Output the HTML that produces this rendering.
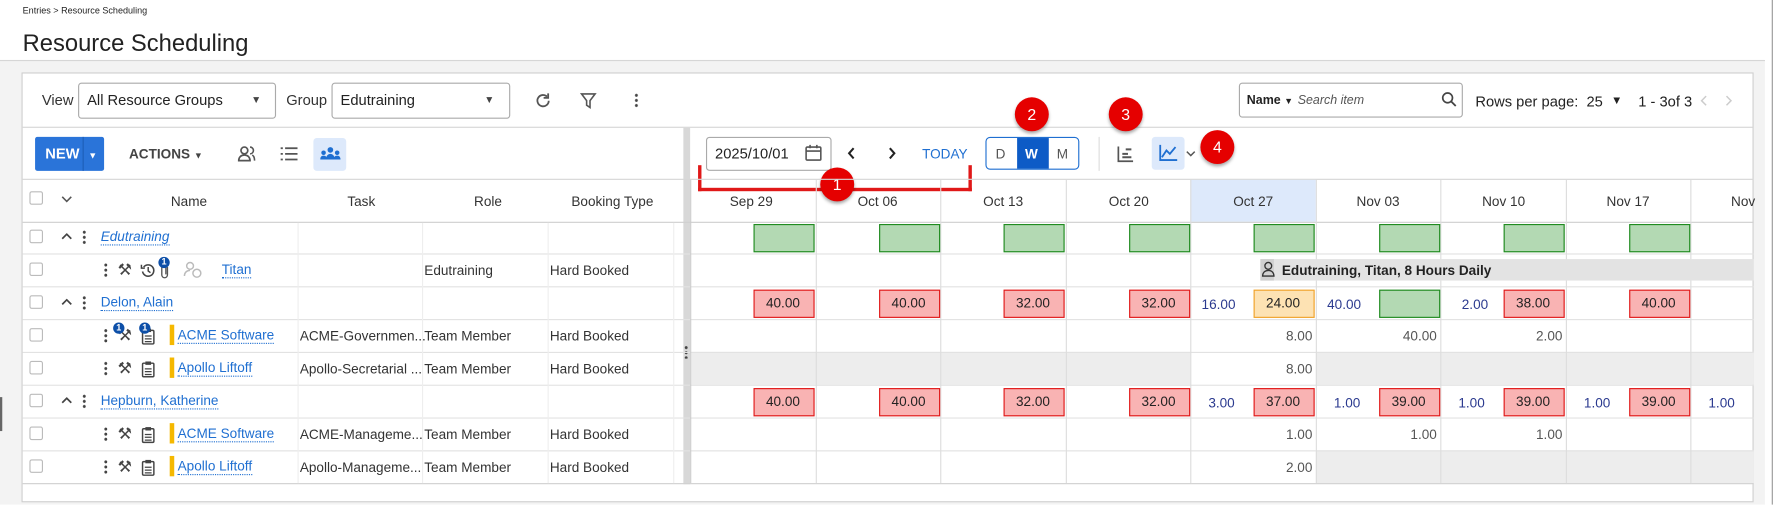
<!DOCTYPE html>
<html><head><meta charset="utf-8"><style>
*{box-sizing:border-box;margin:0;padding:0}
body{width:1774px;height:505px;overflow:hidden;background:#fff;font-family:"Liberation Sans",sans-serif;}
#w{position:absolute;left:0;top:0;width:1568px;height:446px;transform:scale(1.13138);transform-origin:0 0;}
.a{position:absolute}
.t{position:absolute;font-size:12px;color:#333;white-space:nowrap;line-height:14px}
.lk{color:#1f6fd1;border-bottom:1px dotted #1f6fd1;line-height:13px}
.cb{position:absolute;width:12px;height:12px;border:1px solid #bbb;border-radius:2px;background:#fff}
.hl{position:absolute;height:1px;background:#e2e2e2}
.vl{position:absolute;width:1px;background:#ddd}
.g{position:absolute;width:54px;height:25px;background:#b3d9b3;border:1px solid #1e8a1e}
.r{position:absolute;width:54px;height:25px;background:#f9b3b3;border:1px solid #e01818;font-size:12px;color:#222;padding-left:10px;line-height:23px}
.o{position:absolute;width:54px;height:25px;background:#fde2b3;border:1px solid #f0a22a;font-size:12px;color:#222;padding-left:10px;line-height:23px}
.n{position:absolute;font-size:12px;color:#2b3a8f;line-height:14px}
.m{position:absolute;font-size:12px;color:#555;line-height:14px;text-align:right;width:50px}
.rc{position:absolute;width:30px;height:30px;border-radius:50%;background:#e50000;color:#fff;font-size:14px;text-align:center;line-height:30px;box-shadow:0 2px 3px rgba(0,0,0,.35)}
.kb{position:absolute;width:3px;height:13px;background:radial-gradient(circle,#444 1.2px,transparent 1.4px) 0 0/3px 4.5px}
.bd{position:absolute;width:10px;height:10px;border-radius:50%;background:#0d4fa8;color:#fff;font-size:8px;font-weight:bold;text-align:center;line-height:10px}
.yb{position:absolute;width:4px;height:18px;background:#f5b800}
</style></head><body><div id="w">
<div class="t" style="left:20px;top:3px;font-size:8px;color:#222">Entries &gt; Resource Scheduling</div>
<div class="t" style="left:20px;top:27px;font-size:21px;line-height:24px;color:#222">Resource Scheduling</div>
<div class="a" style="left:0;top:53px;width:1560px;height:393px;background:#f3f3f3;border-top:1px solid #d6d6d6"></div>
<div class="a" style="left:1566px;top:0;width:1px;height:446px;background:#999"></div>
<div class="a" style="left:19px;top:64px;width:1531px;height:380px;background:#fff;border:1px solid #cfcfcf"></div>
<div class="a" style="left:0;top:351px;width:2px;height:30px;background:#666"></div>
<!-- toolbar 1 -->
<div class="t" style="left:37px;top:82px;font-size:13px">View</div>
<div class="a" style="left:69px;top:73px;width:175px;height:32px;border:1px solid #aaa;border-radius:3px"></div>
<div class="t" style="left:77px;top:82px;font-size:13px;color:#222">All Resource Groups</div>
<div class="t" style="left:222px;top:81px;font-size:9px;color:#444">▼</div>
<div class="t" style="left:253px;top:82px;font-size:13px">Group</div>
<div class="a" style="left:293px;top:73px;width:158px;height:32px;border:1px solid #aaa;border-radius:3px"></div>
<div class="t" style="left:301px;top:82px;font-size:13px;color:#222">Edutraining</div>
<div class="t" style="left:428px;top:81px;font-size:9px;color:#444">▼</div>
<svg class="a" style="left:472px;top:81px" width="16" height="16" viewBox="0 0 16 16"><path d="M13 8a5 5 0 1 1-1.5-3.6" fill="none" stroke="#555" stroke-width="1.6"/><path d="M12.5 1.5v4h-4" fill="none" stroke="#555" stroke-width="1.6"/></svg>
<svg class="a" style="left:512px;top:81px" width="16" height="16" viewBox="0 0 16 16"><path d="M2 2h12l-4.5 6v6l-3-2V8z" fill="none" stroke="#555" stroke-width="1.4"/></svg>
<div class="kb" style="left:561px;top:82px"></div>
<div class="a" style="left:1095px;top:73px;width:198px;height:31px;border:1px solid #aaa;border-radius:3px"></div>
<div class="t" style="left:1102px;top:82px;font-size:11px;font-weight:bold;color:#222">Name <span style="font-size:8px;font-weight:normal">▼</span></div>
<div class="t" style="left:1147px;top:82px;font-size:11px;font-style:italic;color:#555">Search item</div>
<svg class="a" style="left:1274px;top:81px" width="14" height="14" viewBox="0 0 14 14"><circle cx="5.5" cy="5.5" r="4.3" fill="none" stroke="#444" stroke-width="1.5"/><path d="M8.7 8.7l4 4" stroke="#444" stroke-width="1.6"/></svg>
<div class="t" style="left:1304px;top:83px;font-size:13px;color:#222">Rows per page:&nbsp; 25</div>
<div class="t" style="left:1424px;top:83px;font-size:10px;color:#222">▼</div>
<div class="t" style="left:1448px;top:83px;font-size:13px;color:#222">1 - 3of 3</div>
<svg class="a" style="left:1503px;top:84px" width="6" height="10" viewBox="0 0 6 10"><path d="M5 1L1 5l4 4" fill="none" stroke="#ccc" stroke-width="1.3"/></svg>
<svg class="a" style="left:1525px;top:84px" width="6" height="10" viewBox="0 0 6 10"><path d="M1 1l4 4-4 4" fill="none" stroke="#ccc" stroke-width="1.3"/></svg>
<div class="hl" style="left:20px;top:112px;width:1530px;background:#d6d6d6"></div>
<!-- toolbar 2 left -->
<div class="a" style="left:31px;top:121px;width:61px;height:30px;background:#2a74d9;border-radius:2px"></div>
<div class="t" style="left:40px;top:129px;font-size:13px;font-weight:bold;color:#fff">NEW</div>
<div class="a" style="left:73px;top:121px;width:1px;height:30px;background:#1d5fb8"></div>
<div class="t" style="left:78px;top:131px;font-size:8px;color:#fff">▼</div>
<div class="t" style="left:114px;top:129px;font-size:12px;font-weight:bold;color:#444">ACTIONS <span style="font-size:8px">▼</span></div>
<svg class="a" style="left:210px;top:129px" width="16" height="14" viewBox="0 0 16 14"><circle cx="6" cy="4" r="3" fill="none" stroke="#555" stroke-width="1.5"/><path d="M1 13c0-3 2-5 5-5s5 2 5 5z" fill="none" stroke="#555" stroke-width="1.5"/><path d="M11 1a3 3 0 0 1 0 6M13 8c1.5 1 2 3 2 5" fill="none" stroke="#555" stroke-width="1.4"/></svg>
<svg class="a" style="left:248px;top:130px" width="15" height="12" viewBox="0 0 15 12"><path d="M0 1h2M4 1h11M0 6h2M4 6h11M0 11h2M4 11h11" stroke="#555" stroke-width="1.6"/></svg>
<div class="a" style="left:277px;top:122px;width:29px;height:29px;background:#dde9fb;border-radius:3px"></div>
<svg class="a" style="left:283px;top:129px" width="18" height="14" viewBox="0 0 18 14"><circle cx="9" cy="3.5" r="2.5" fill="#1f6fd1"/><path d="M5 12c0-3 2-5 4-5s4 2 4 5z" fill="#1f6fd1"/><circle cx="3" cy="6" r="2" fill="#1f6fd1"/><circle cx="15" cy="6" r="2" fill="#1f6fd1"/><path d="M0 12c0-2 1-3.5 3-3.5s3 1.5 3 3.5zM12 12c0-2 1-3.5 3-3.5s3 1.5 3 3.5z" fill="#1f6fd1"/></svg>
<!-- splitter -->
<div class="a" style="left:604px;top:113px;width:6px;height:315px;background:#d8d8d8"></div>
<div class="kb" style="left:605px;top:305px;height:12px"></div>
<!-- toolbar 2 right -->
<div class="a" style="left:624px;top:121px;width:111px;height:30px;border:1px solid #aaa;border-radius:3px"></div>
<div class="t" style="left:632px;top:129px;font-size:13px;color:#222">2025/10/01</div>
<svg class="a" style="left:711px;top:127px" width="16" height="16" viewBox="0 0 16 16"><rect x="1.5" y="3" width="13" height="11.5" rx="1" fill="none" stroke="#555" stroke-width="1.4"/><path d="M1.5 6.5h13M5 1v3M11 1v3" stroke="#555" stroke-width="1.4"/></svg>
<svg class="a" style="left:749px;top:130px" width="7" height="11" viewBox="0 0 7 11"><path d="M5.5 1L1.5 5.5l4 4.5" fill="none" stroke="#222" stroke-width="1.8"/></svg>
<svg class="a" style="left:785px;top:130px" width="7" height="11" viewBox="0 0 7 11"><path d="M1.5 1l4 4.5-4 4.5" fill="none" stroke="#222" stroke-width="1.8"/></svg>
<div class="t" style="left:815px;top:129px;font-size:12px;color:#1f6fd1">TODAY</div>
<div class="a" style="left:871px;top:121px;width:83px;height:29px;border:1px solid #1f6fd1;border-radius:4px;overflow:hidden"><div class="a" style="left:27px;top:0;width:28px;height:29px;background:#0d5bc6"></div></div>
<div class="t" style="left:880px;top:129px;font-size:12px;color:#555">D</div>
<div class="t" style="left:906px;top:129px;font-size:12px;font-weight:bold;color:#fff">W</div>
<div class="t" style="left:934px;top:129px;font-size:12px;color:#555">M</div>
<div class="a" style="left:971px;top:121px;width:1px;height:30px;background:#ddd"></div>
<svg class="a" style="left:987px;top:128px" width="16" height="16" viewBox="0 0 16 16"><path d="M1.5 1.5v13h13" fill="none" stroke="#555" stroke-width="1.5"/><path d="M8 4h5M5 8h5M5 11h8" stroke="#555" stroke-width="1.8"/></svg>
<div class="a" style="left:1018px;top:121px;width:29px;height:29px;background:#dde9fb;border-radius:3px"></div>
<svg class="a" style="left:1024px;top:127px" width="17" height="16" viewBox="0 0 17 16"><path d="M1.5 1v13.5h15" fill="none" stroke="#1f6fd1" stroke-width="1.6"/><path d="M3 12l4-6 3 3 5-6" fill="none" stroke="#1f6fd1" stroke-width="1.6"/></svg>
<svg class="a" style="left:1048px;top:133px" width="9" height="6" viewBox="0 0 9 6"><path d="M1 1l3.5 3.5L8 1" fill="none" stroke="#555" stroke-width="1.3"/></svg>
<!-- red bracket -->
<div class="a" style="left:617px;top:146px;width:242px;height:23px;border:3px solid #e01818;border-top:none"></div>
<div class="rc" style="left:725px;top:148px">1</div>
<div class="rc" style="left:897px;top:86px">2</div>
<div class="rc" style="left:980px;top:86px">3</div>
<div class="rc" style="left:1061px;top:115px">4</div>
<div class="hl" style="left:20px;top:158px;width:1530px;background:#d6d6d6"></div>
<!-- header -->
<div class="cb" style="left:26px;top:169px"></div>
<svg class="a" style="left:54px;top:173px" width="10" height="6" viewBox="0 0 10 6"><path d="M1 1l4 4 4-4" fill="none" stroke="#555" stroke-width="1.4"/></svg>
<div class="t" style="left:151px;top:171px">Name</div>
<div class="t" style="left:307px;top:171px">Task</div>
<div class="t" style="left:419px;top:171px">Role</div>
<div class="t" style="left:505px;top:171px">Booking Type</div>
<div class="a" style="left:1052px;top:159px;width:111px;height:37px;background:#dde9fb"></div>
<div class="t" style="left:645px;top:171px">Sep 29</div>
<div class="t" style="left:758px;top:171px">Oct 06</div>
<div class="t" style="left:869px;top:171px">Oct 13</div>
<div class="t" style="left:980px;top:171px">Oct 20</div>
<div class="t" style="left:1090px;top:171px">Oct 27</div>
<div class="t" style="left:1199px;top:171px">Nov 03</div>
<div class="t" style="left:1310px;top:171px">Nov 10</div>
<div class="t" style="left:1420px;top:171px">Nov 17</div>
<div class="t" style="left:1530px;top:171px">Nov</div>
<div class="hl" style="left:20px;top:196px;width:1530px;background:#cfcfcf"></div>
<!-- gray row backgrounds -->
<div class="a" style="left:611px;top:311px;width:441px;height:29px;background:#ededed"></div>
<div class="a" style="left:1163px;top:311px;width:387px;height:29px;background:#ededed"></div>
<div class="a" style="left:1163px;top:398px;width:387px;height:29px;background:#ededed"></div>
<!-- row lines -->
<div class="hl" style="left:20px;top:224px;width:1530px"></div>
<div class="hl" style="left:20px;top:253px;width:1530px"></div>
<div class="hl" style="left:20px;top:282px;width:1530px"></div>
<div class="hl" style="left:20px;top:311px;width:1530px"></div>
<div class="hl" style="left:20px;top:340px;width:1530px"></div>
<div class="hl" style="left:20px;top:369px;width:1530px"></div>
<div class="hl" style="left:20px;top:398px;width:1530px"></div>
<div class="hl" style="left:20px;top:427px;width:1530px;background:#d0d0d0"></div>
<!-- column lines -->
<div class="vl" style="left:263px;top:197px;height:230px;background:#eee"></div>
<div class="vl" style="left:373px;top:197px;height:230px;background:#eee"></div>
<div class="vl" style="left:484px;top:197px;height:230px;background:#eee"></div>
<div class="vl" style="left:595px;top:197px;height:230px;background:#eee"></div>
<div class="vl" style="left:610px;top:159px;height:268px;background:#ccc"></div>
<div class="vl" style="left:721px;top:159px;height:268px"></div>
<div class="vl" style="left:831px;top:159px;height:268px"></div>
<div class="vl" style="left:942px;top:159px;height:268px"></div>
<div class="vl" style="left:1052px;top:159px;height:268px"></div>
<div class="vl" style="left:1163px;top:159px;height:268px"></div>
<div class="vl" style="left:1273px;top:159px;height:268px"></div>
<div class="vl" style="left:1384px;top:159px;height:268px"></div>
<div class="vl" style="left:1494px;top:159px;height:268px"></div>
<!-- left rows -->
<div class="cb" style="left:26px;top:203px"></div><div class="cb" style="left:26px;top:232px"></div><div class="cb" style="left:26px;top:261px"></div><div class="cb" style="left:26px;top:290px"></div><div class="cb" style="left:26px;top:319px"></div><div class="cb" style="left:26px;top:348px"></div><div class="cb" style="left:26px;top:377px"></div><div class="cb" style="left:26px;top:406px"></div>
<svg class="a" style="left:54px;top:206px" width="10" height="6" viewBox="0 0 10 6"><path d="M1 5l4-4 4 4" fill="none" stroke="#444" stroke-width="1.5"/></svg>
<svg class="a" style="left:54px;top:264px" width="10" height="6" viewBox="0 0 10 6"><path d="M1 5l4-4 4 4" fill="none" stroke="#444" stroke-width="1.5"/></svg>
<svg class="a" style="left:54px;top:351px" width="10" height="6" viewBox="0 0 10 6"><path d="M1 5l4-4 4 4" fill="none" stroke="#444" stroke-width="1.5"/></svg>
<div class="kb" style="left:73px;top:203px"></div><div class="kb" style="left:73px;top:261px"></div><div class="kb" style="left:73px;top:348px"></div>
<div class="kb" style="left:92px;top:232px"></div><div class="kb" style="left:92px;top:290px"></div><div class="kb" style="left:92px;top:319px"></div><div class="kb" style="left:92px;top:377px"></div><div class="kb" style="left:92px;top:406px"></div>
<div class="t lk" style="left:89px;top:203px;font-style:italic">Edutraining</div>
<div class="t lk" style="left:89px;top:261px">Delon, Alain</div>
<div class="t lk" style="left:89px;top:348px">Hepburn, Katherine</div>
<div class="t lk" style="left:196px;top:232px">Titan</div>
<div class="t lk" style="left:157px;top:290px">ACME Software</div>
<div class="t lk" style="left:157px;top:319px">Apollo Liftoff</div>
<div class="t lk" style="left:157px;top:377px">ACME Software</div>
<div class="t lk" style="left:157px;top:406px">Apollo Liftoff</div>
<div class="yb" style="left:150px;top:287px"></div><div class="yb" style="left:150px;top:316px"></div><div class="yb" style="left:150px;top:374px"></div><div class="yb" style="left:150px;top:403px"></div>
<!-- wrench icons -->
<div class="t" style="left:104px;top:231px;font-size:14px;color:#444">⚒</div>
<div class="t" style="left:104px;top:289px;font-size:14px;color:#444">⚒</div>
<div class="t" style="left:104px;top:318px;font-size:14px;color:#444">⚒</div>
<div class="t" style="left:104px;top:376px;font-size:14px;color:#444">⚒</div>
<div class="t" style="left:104px;top:405px;font-size:14px;color:#444">⚒</div>
<svg class="a" style="left:124px;top:232px" width="14" height="14" viewBox="0 0 14 14"><path d="M3 4a5 5 0 1 1-1 4" fill="none" stroke="#444" stroke-width="1.4"/><path d="M1 2v3h3M7 4v3.5l2 1.5" fill="none" stroke="#444" stroke-width="1.3"/></svg>
<svg class="a" style="left:141px;top:232px" width="10" height="15" viewBox="0 0 10 15"><path d="M7 4v7a2.5 2.5 0 0 1-5 0V3a1.8 1.8 0 0 1 3.6 0v7.5" fill="none" stroke="#555" stroke-width="1.2"/></svg>
<svg class="a" style="left:162px;top:231px" width="17" height="15" viewBox="0 0 17 15"><circle cx="6" cy="4" r="3" fill="none" stroke="#bbb" stroke-width="1.3"/><path d="M1 13c0-3 2-5 5-5" fill="none" stroke="#bbb" stroke-width="1.3"/><circle cx="12" cy="10.5" r="3.5" fill="none" stroke="#bbb" stroke-width="1.3"/></svg>
<svg class="a" style="left:125px;top:290px" width="12" height="15" viewBox="0 0 12 15"><rect x="1" y="2" width="10" height="12" rx="1" fill="none" stroke="#444" stroke-width="1.3"/><rect x="3.5" y="0.5" width="5" height="3" fill="#444"/><path d="M3 7h6M3 9.5h6M3 12h6" stroke="#444" stroke-width="1.1"/></svg>
<svg class="a" style="left:125px;top:319px" width="12" height="15" viewBox="0 0 12 15"><rect x="1" y="2" width="10" height="12" rx="1" fill="none" stroke="#444" stroke-width="1.3"/><rect x="3.5" y="0.5" width="5" height="3" fill="#444"/><path d="M3 7h6M3 9.5h6M3 12h6" stroke="#444" stroke-width="1.1"/></svg>
<svg class="a" style="left:125px;top:377px" width="12" height="15" viewBox="0 0 12 15"><rect x="1" y="2" width="10" height="12" rx="1" fill="none" stroke="#444" stroke-width="1.3"/><rect x="3.5" y="0.5" width="5" height="3" fill="#444"/><path d="M3 7h6M3 9.5h6M3 12h6" stroke="#444" stroke-width="1.1"/></svg>
<svg class="a" style="left:125px;top:406px" width="12" height="15" viewBox="0 0 12 15"><rect x="1" y="2" width="10" height="12" rx="1" fill="none" stroke="#444" stroke-width="1.3"/><rect x="3.5" y="0.5" width="5" height="3" fill="#444"/><path d="M3 7h6M3 9.5h6M3 12h6" stroke="#444" stroke-width="1.1"/></svg>
<div class="bd" style="left:140px;top:227px">1</div>
<div class="bd" style="left:100px;top:285px">1</div>
<div class="bd" style="left:123px;top:285px">1</div>
<div class="t" style="left:375px;top:232px">Edutraining</div>
<div class="t" style="left:486px;top:232px">Hard Booked</div>
<div class="t" style="left:265px;top:290px">ACME-Governmen...</div>
<div class="t" style="left:375px;top:290px">Team Member</div>
<div class="t" style="left:486px;top:290px">Hard Booked</div>
<div class="t" style="left:265px;top:319px">Apollo-Secretarial ...</div>
<div class="t" style="left:375px;top:319px">Team Member</div>
<div class="t" style="left:486px;top:319px">Hard Booked</div>
<div class="t" style="left:265px;top:377px">ACME-Manageme...</div>
<div class="t" style="left:375px;top:377px">Team Member</div>
<div class="t" style="left:486px;top:377px">Hard Booked</div>
<div class="t" style="left:265px;top:406px">Apollo-Manageme...</div>
<div class="t" style="left:375px;top:406px">Team Member</div>
<div class="t" style="left:486px;top:406px">Hard Booked</div>
<!-- grid row 1 green -->
<div class="g" style="left:666px;top:198px"></div><div class="g" style="left:777px;top:198px"></div><div class="g" style="left:887px;top:198px"></div><div class="g" style="left:998px;top:198px"></div><div class="g" style="left:1108px;top:198px"></div><div class="g" style="left:1219px;top:198px"></div><div class="g" style="left:1329px;top:198px"></div><div class="g" style="left:1440px;top:198px"></div>
<!-- titan bar -->
<div class="a" style="left:1114px;top:229px;width:436px;height:19px;background:#e3e3e3"></div>
<div class="a" style="left:1114px;top:229px;width:12px;height:19px;background:#d0d0d0"></div>
<svg class="a" style="left:1115px;top:231px" width="12" height="14" viewBox="0 0 12 14"><circle cx="6" cy="4" r="3" fill="none" stroke="#333" stroke-width="1.2"/><path d="M1 13c0-3 2-5 5-5s5 2 5 5z" fill="none" stroke="#333" stroke-width="1.2"/></svg>
<div class="t" style="left:1133px;top:232px;font-weight:bold;color:#222">Edutraining, Titan, 8 Hours Daily</div>
<!-- Delon -->
<div class="r" style="left:666px;top:256px">40.00</div><div class="r" style="left:777px;top:256px">40.00</div><div class="r" style="left:887px;top:256px">32.00</div><div class="r" style="left:998px;top:256px">32.00</div>
<div class="n" style="left:1062px;top:262px">16.00</div><div class="o" style="left:1108px;top:256px">24.00</div>
<div class="n" style="left:1173px;top:262px">40.00</div><div class="g" style="left:1219px;top:256px"></div>
<div class="n" style="left:1292px;top:262px">2.00</div><div class="r" style="left:1329px;top:256px">38.00</div>
<div class="r" style="left:1440px;top:256px">40.00</div>
<!-- ACME / Apollo -->
<div class="m" style="left:1110px;top:290px">8.00</div>
<div class="m" style="left:1220px;top:290px">40.00</div>
<div class="m" style="left:1331px;top:290px">2.00</div>
<div class="m" style="left:1110px;top:319px">8.00</div>
<!-- Hepburn -->
<div class="r" style="left:666px;top:343px">40.00</div><div class="r" style="left:777px;top:343px">40.00</div><div class="r" style="left:887px;top:343px">32.00</div><div class="r" style="left:998px;top:343px">32.00</div>
<div class="n" style="left:1068px;top:349px">3.00</div><div class="r" style="left:1108px;top:343px">37.00</div>
<div class="n" style="left:1179px;top:349px">1.00</div><div class="r" style="left:1219px;top:343px">39.00</div>
<div class="n" style="left:1289px;top:349px">1.00</div><div class="r" style="left:1329px;top:343px">39.00</div>
<div class="n" style="left:1400px;top:349px">1.00</div><div class="r" style="left:1440px;top:343px">39.00</div>
<div class="n" style="left:1510px;top:349px">1.00</div>
<div class="m" style="left:1110px;top:377px">1.00</div>
<div class="m" style="left:1220px;top:377px">1.00</div>
<div class="m" style="left:1331px;top:377px">1.00</div>
<div class="m" style="left:1110px;top:406px">2.00</div>
</div></body></html>
